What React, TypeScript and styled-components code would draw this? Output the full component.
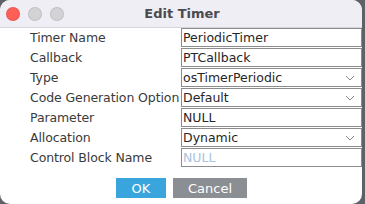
import React from 'react'
import styled, { createGlobalStyle } from 'styled-components'

const GlobalStyle = createGlobalStyle`
  html, body {
    margin: 0;
    padding: 0;
    background: #5f6166;
  }
  body {
    font-family: 'DejaVu Sans', 'Liberation Sans', sans-serif;
  }
`

const StyledWindow = styled.div`
  width: 362px;
  height: 204px;
  background: #ffffff;
  border-radius: 10px;
  overflow: hidden;
  display: flex;
  flex-direction: column;
`

const StyledTitleBar = styled.div`
  position: relative;
  height: 27px;
  background: #efeef4;
  border-bottom: 1px solid #d6d6da;
  display: flex;
  align-items: center;
  justify-content: center;
`

const StyledLights = styled.div`
  position: absolute;
  left: 6px;
  top: 7px;
  display: flex;
  gap: 8px;
`

interface LightProps {
  color: string
}

const StyledLight = styled.span<LightProps>`
  width: 12px;
  height: 12px;
  border-radius: 50%;
  background: ${({ color }) => color};
  border: 0.5px solid rgba(0, 0, 0, 0.08);
`

const StyledTitle = styled.span`
  font-size: 13px;
  font-weight: bold;
  color: #4b4b4f;
  margin-left: 2px;
`

const StyledForm = styled.div`
  display: grid;
  grid-template-columns: 151px 181px;
  grid-auto-rows: 19px;
  row-gap: 1px;
  padding-left: 30px;
`

const StyledLabel = styled.div`
  font-size: 12.5px;
  color: #3a3a3a;
  display: flex;
  align-items: center;
  white-space: nowrap;
  letter-spacing: -0.1px;
`

interface FieldProps {
  isPlaceholder?: boolean
}

const StyledField = styled.div<FieldProps>`
  box-sizing: border-box;
  border: 1px solid #8c8c8c;
  display: flex;
  align-items: center;
  justify-content: space-between;
  padding: 0 6px 0 1px;
  font-size: 12.5px;
  color: ${({ isPlaceholder }) => (isPlaceholder ? '#a9c3dc' : '#262626')};
`

const StyledButtons = styled.div`
  display: flex;
  justify-content: center;
  gap: 7px;
  margin-top: 11px;
  padding-left: 1px;
`

interface ButtonProps {
  primary?: boolean
}

const StyledButton = styled.button<ButtonProps>`
  height: 20px;
  width: ${({ primary }) => (primary ? '50px' : '74px')};
  border: none;
  padding: 0;
  background: ${({ primary }) => (primary ? '#3aa5dc' : '#8b8e93')};
  color: #ffffff;
  font-family: 'DejaVu Sans', sans-serif;
  font-size: 13px;
`

const Chevron = () => (
  <svg width="10" height="6" viewBox="0 0 10 6">
    <path d="M1 1 L5 5 L9 1" fill="none" stroke="#8a8a8a" strokeWidth="1" />
  </svg>
)

interface Row {
  label: string
  value: string
  select?: boolean
  placeholder?: boolean
}

const rows: Row[] = [
  { label: 'Timer Name', value: 'PeriodicTimer' },
  { label: 'Callback', value: 'PTCallback' },
  { label: 'Type', value: 'osTimerPeriodic', select: true },
  { label: 'Code Generation Option', value: 'Default', select: true },
  { label: 'Parameter', value: 'NULL' },
  { label: 'Allocation', value: 'Dynamic', select: true },
  { label: 'Control Block Name', value: 'NULL', placeholder: true },
]

export default function App() {
  return (
    <>
      <GlobalStyle />
      <StyledWindow>
        <StyledTitleBar>
          <StyledLights>
            <StyledLight color="#fe5f57" />
            <StyledLight color="#d3d3d6" />
            <StyledLight color="#d3d3d6" />
          </StyledLights>
          <StyledTitle>Edit Timer</StyledTitle>
        </StyledTitleBar>
        <StyledForm>
          {rows.map((row) => (
            <React.Fragment key={row.label}>
              <StyledLabel>{row.label}</StyledLabel>
              <StyledField isPlaceholder={row.placeholder}>
                <span>{row.value}</span>
                {row.select && <Chevron />}
              </StyledField>
            </React.Fragment>
          ))}
        </StyledForm>
        <StyledButtons>
          <StyledButton primary>OK</StyledButton>
          <StyledButton>Cancel</StyledButton>
        </StyledButtons>
      </StyledWindow>
    </>
  )
}
